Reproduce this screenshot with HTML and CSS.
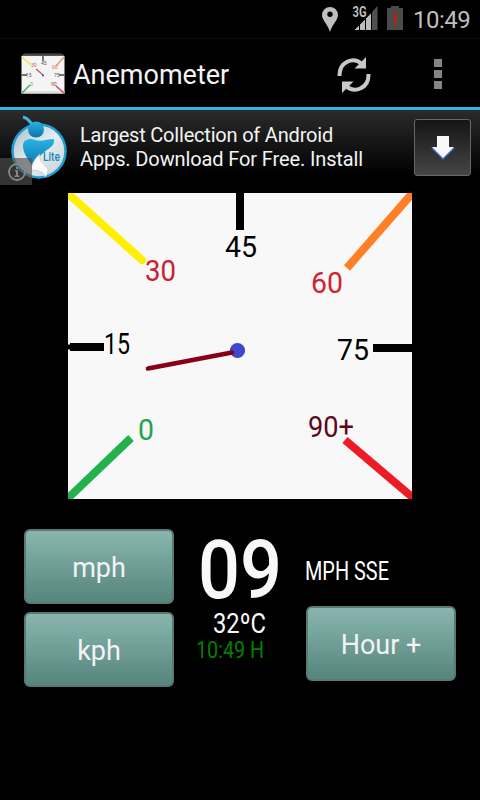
FILE: index.html
```html
<!DOCTYPE html>
<html lang="en">
<head>
    <meta charset="UTF-8">
    <meta name="viewport" content="width=device-width, initial-scale=1.0">
    <title>Anemometer</title>
    <link rel="stylesheet" href="styles.css">
</head>
<body>
<div class="status-bar">
    <svg class="pin" width="16" height="25" viewBox="0 0 16 25">
        <path fill="#bebebe" fill-rule="evenodd" d="M8 0a8 8 0 0 0-8 8c0 5 6 10 8 17 2-7 8-12 8-17a8 8 0 0 0-8-8zm0 4.500a2.700 2.700 0 1 1 0 5.400 2.700 2.700 0 0 1 0-5.400z"/>
    </svg>
    <svg class="signal" width="25" height="24" viewBox="0 0 25 24">
        <path fill="#bebebe" d="M1.500 24L6 19.500V24zM7 24v-5.500L12 13.500V24zM13 24V12.500L18 7.500V24z"/>
        <path fill="#505050" d="M19 24V6L24.500 0v24z"/>
        <text class="net" x="-0.500" y="11" textLength="14" lengthAdjust="spacingAndGlyphs">3G</text>
    </svg>
    <svg class="battery" width="16" height="24" viewBox="0 0 16 24">
        <path fill="#4a4a4a" d="M4 0h8v2h4v22H0V2h4z"/>
        <path fill="#c62000" d="M7 7h2.500v8.500H7zM7 17.500h2.500V20H7z"/>
    </svg>
    <span class="clock">10:49</span>
</div>

<div class="action-bar">
    <svg class="app-icon" width="44" height="42" viewBox="0 0 44 42">
        <defs>
            <linearGradient id="top" x2="0" y2="1">
                <stop offset="0" stop-color="#222"/>
                <stop offset="1" stop-color="#777"/>
            </linearGradient>
        </defs>
        <path fill="url(#top)" d="M1 3l3-2h36l3 2v2H1z"/>
        <path fill="#f4f4f4" d="M.5 4h43v37.500H.5z"/>
        <path fill="#ddd" d="M.5 39h43v2.500H.5z"/>
        <g fill="none" stroke-width="1.400">
            <path stroke="#f6e72c" d="M1 5l9 8"/>
            <path stroke="#e99a5a" d="M43 5l-8 9"/>
            <path stroke="#444" d="M22 4v5M.5 23H6M38 23h5.500"/>
            <path stroke="#42a860" d="M1 41l8-8"/>
            <path stroke="#d8424b" d="M43 41l-8-7"/>
            <path stroke="#b5606c" d="M15 17l7 6"/>
        </g>
        <circle cx="22" cy="23.500" r="1" fill="#44c"/>
        <g class="tiny">
            <text x="10" y="15" fill="#c66">30</text>
            <text x="20" y="13" fill="#555">45</text>
            <text x="31" y="17" fill="#d66">60</text>
            <text x="5" y="25" fill="#555">15</text>
            <text x="33" y="25" fill="#555">75</text>
            <text x="9" y="34" fill="#5b7">0</text>
            <text x="30" y="34" fill="#855">90</text>
        </g>
    </svg>
    <h1>Anemometer</h1>
    <svg class="refresh" width="34" height="36" viewBox="0 0 34 36">
        <g fill="none" stroke="#c8c8c8" stroke-width="4">
            <path d="M2.500 19C2 5 16-1 25 7"/>
            <path d="M31.500 17C32 31 18 37 9 29"/>
        </g>
        <path fill="#c8c8c8" d="M29 0v11.500H17.500zM5 36V24.500h11.500z"/>
    </svg>
    <div class="overflow"><i></i><i></i><i></i></div>
</div>

<div class="ad">
    <svg class="ad-logo" width="60" height="66" viewBox="0 0 60 66">
        <defs>
            <linearGradient id="blue" x2="0" y2="1">
                <stop offset="0" stop-color="#2ab2e2"/>
                <stop offset="1" stop-color="#0876ae"/>
            </linearGradient>
            <linearGradient id="white" x2="1" y2="1">
                <stop offset="0" stop-color="#a9bdc5"/>
                <stop offset=".5" stop-color="#e6edf0"/>
                <stop offset="1" stop-color="#c3d1d7"/>
            </linearGradient>
        </defs>
        <circle cx="30" cy="36" r="26.500" fill="url(#white)" stroke="#209fd2" stroke-width="2.500"/>
        <path fill="none" stroke="#45b5e0" stroke-width="3" d="M14 2c5 1 6 4 9 7"/>
        <circle cx="27" cy="14.500" r="8" fill="url(#blue)"/>
        <path fill="url(#blue)" d="M14 31c0-7 7-8 12-6 7 2 12-1 19-1 1 8-6 9-12 15-5 5-5 9-9 13C20 45 14 39 14 31z"/>
        <path fill="#fafafa" stroke="#b8c4ca" stroke-width=".6" d="M22 55c1-7 4-12 9-16-2 9 7 11 8 16 0 3-1 5-3 7-1-5-7-7-14-7z"/>
        <text class="lite" x="34" y="46" textLength="17" lengthAdjust="spacingAndGlyphs">Lite</text>
    </svg>
    <p><span>Largest Collection of Android</span><br>Apps. Download For Free. Install</p>
    <div class="download">
        <svg width="24" height="24" viewBox="0 0 24 24">
            <path fill="#3f62c0" d="M6 1h12v11h6L12 24 0 12h6z"/>
            <path fill="#f8f8f8" d="M6 0h12v11h5L12 22 1 11h5z"/>
        </svg>
    </div>
    <div class="ad-info">
        <svg width="18" height="18" viewBox="0 0 18 18">
            <circle cx="9" cy="9" r="8" fill="none" stroke="#858585" stroke-width="1.800"/>
            <path fill="#858585" d="M8 4h2v2H8zM7 7h3v5.500h1.500V14H6.500v-1.500H8v-4H7z"/>
        </svg>
    </div>
</div>

<svg class="dial" width="344" height="306" viewBox="0 0 344 306">
    <g fill="none" stroke-width="8">
        <path stroke="#fff000" stroke-linecap="round" d="M-4-3L74 67"/>
        <path stroke="#ff7f27" d="M348-4L279 75"/>
        <path stroke="#22b14c" d="M-4 309l67-64"/>
        <path stroke="#ed1c24" d="M350 309l-73-62"/>
        <path stroke="#000" d="M172 0v37M2 154h34M305 155h39"/>
        <path stroke="#000" stroke-width="5" d="M0 154h4"/>
    </g>
    <circle cx="169.500" cy="157.500" r="7.600" fill="#3f48cc"/>
    <path stroke="#880015" stroke-width="4.600" stroke-linecap="round" d="M80 175.500l84-16"/>
    <g class="lcd">
        <text x="157" y="64" textLength="32" lengthAdjust="spacingAndGlyphs">45</text>
        <text x="77" y="88" fill="#cc2030" textLength="31" lengthAdjust="spacingAndGlyphs">30</text>
        <text x="243" y="100" fill="#d41f30" textLength="32" lengthAdjust="spacingAndGlyphs">60</text>
        <text x="36" y="161" textLength="26" lengthAdjust="spacingAndGlyphs">15</text>
        <text x="269" y="167" textLength="32" lengthAdjust="spacingAndGlyphs">75</text>
        <text x="70" y="247" fill="#22a548" textLength="16" lengthAdjust="spacingAndGlyphs">0</text>
        <text x="240" y="244" fill="#5c0818" textLength="46" lengthAdjust="spacingAndGlyphs">90+</text>
    </g>
</svg>

<div class="panel">
    <div class="column">
        <button>mph</button>
        <button>kph</button>
    </div>
    <svg class="readout lcd" width="84" height="130" viewBox="0 0 84 130">
        <text class="speed" x="0" y="69" textLength="84" lengthAdjust="spacingAndGlyphs">09</text>
        <text class="temp" x="15" y="104" textLength="53" lengthAdjust="spacingAndGlyphs">32ºC</text>
        <text class="time" x="-2" y="129" textLength="68" lengthAdjust="spacingAndGlyphs">10:49 H</text>
    </svg>
    <div class="column right">
        <svg class="unit lcd" width="84" height="20" viewBox="0 0 84 20">
            <text x="-1" y="19" textLength="84" lengthAdjust="spacingAndGlyphs">MPH SSE</text>
        </svg>
        <button>Hour +</button>
    </div>
</div>
</body>
</html>
```
FILE: styles.css
```css
* { box-sizing: border-box; }
body {
    margin: 0;
    width: 480px;
    height: 800px;
    overflow: hidden;
    background: #000;
    color: #f3f3f3;
    font-family: Roboto, "Liberation Sans", sans-serif;
}
svg { display: block; flex: none; }

.status-bar {
    display: flex;
    height: 38px;
    padding: 6px 9px 0 0;
    justify-content: flex-end;
    align-items: flex-start;
}
.pin { margin: 1px 15px 0 0; }
.signal { margin-right: 9px; overflow: visible; }
.net {
    font-size: 14px;
    font-weight: bold;
    fill: #bebebe;
    stroke: #000;
    stroke-width: 2px;
    paint-order: stroke;
}
.battery { margin-right: 10px; }
.clock {
    width: 58px;
    font-size: 24px;
    line-height: 28px;
    letter-spacing: -0.5px;
    color: #bebebe;
    white-space: nowrap;
}

.action-bar {
    display: flex;
    align-items: center;
    height: 72px;
    padding: 0 38px 0 21px;
    border-top: 1px solid #0c0c0c;
    border-bottom: 3px solid #33b5e5;
}
.action-bar h1 {
    flex: 1;
    margin: 3px 0 0 8px;
    font-size: 27px;
    line-height: 32px;
    font-weight: normal;
}
.tiny { font-size: 5px; }
.refresh { margin-top: 3px; }
.overflow {
    display: grid;
    gap: 3px;
    margin: 2px 0 0 63px;
}
.overflow i {
    width: 8px;
    height: 8px;
    background: #858585;
}

.ad {
    position: relative;
    display: flex;
    height: 75px;
    padding: 5px 9px 0;
    background: linear-gradient(#2b2b2b, #151515 45%, #000 88%);
}
.ad p {
    flex: 1;
    margin: 8px 0 0 11px;
    font-size: 20px;
    line-height: 24px;
    letter-spacing: -0.12px;
    white-space: nowrap;
}
.ad p span { letter-spacing: -0.2px; }
.lite {
    font-size: 12px;
    font-weight: 500;
    fill: #1587bd;
}
.download {
    display: flex;
    width: 57px;
    height: 57px;
    margin-top: 4px;
    align-items: center;
    justify-content: center;
    border: 1px solid #666;
    border-radius: 3px;
    background: linear-gradient(#151515, #454545);
}
/* info tab over the corner of the logo */
.ad-info {
    position: absolute;
    left: 0;
    top: 48px;
    width: 32px;
    height: 27px;
    padding: 5px 0 0 8px;
    background: rgba(80, 80, 80, .65);
}

.dial {
    margin: 8px 0 0 68px;
    background: #f8f8f8;
}
.lcd {
    font-family: Roboto, "Liberation Sans", sans-serif;
    font-size: 29px;
    font-weight: 400;
}

.panel {
    display: flex;
    gap: 24px;
    padding: 30px 24px 0;
}
.column {
    display: flex;
    flex-direction: column;
    gap: 8px;
    width: 150px;
}
.column.right { gap: 25px; }
button {
    height: 75px;
    padding: 2px 0 0;
    border: 2px solid #587a72;
    border-radius: 6px;
    background: linear-gradient(#8ab4af, #7caba3 25%, #6b9891 60%, #55857c);
    color: #f3f3f3;
    font-family: inherit;
    font-size: 27px;
}
.readout { overflow: visible; fill: #f8f8f8; }
.speed { font-size: 82px; font-weight: 500; }
.temp { font-size: 28px; }
.time { font-size: 24px; fill: #008000; }
.unit {
    margin-top: 32px;
    overflow: visible;
    font-size: 25px;
    fill: #fff;
}
```
